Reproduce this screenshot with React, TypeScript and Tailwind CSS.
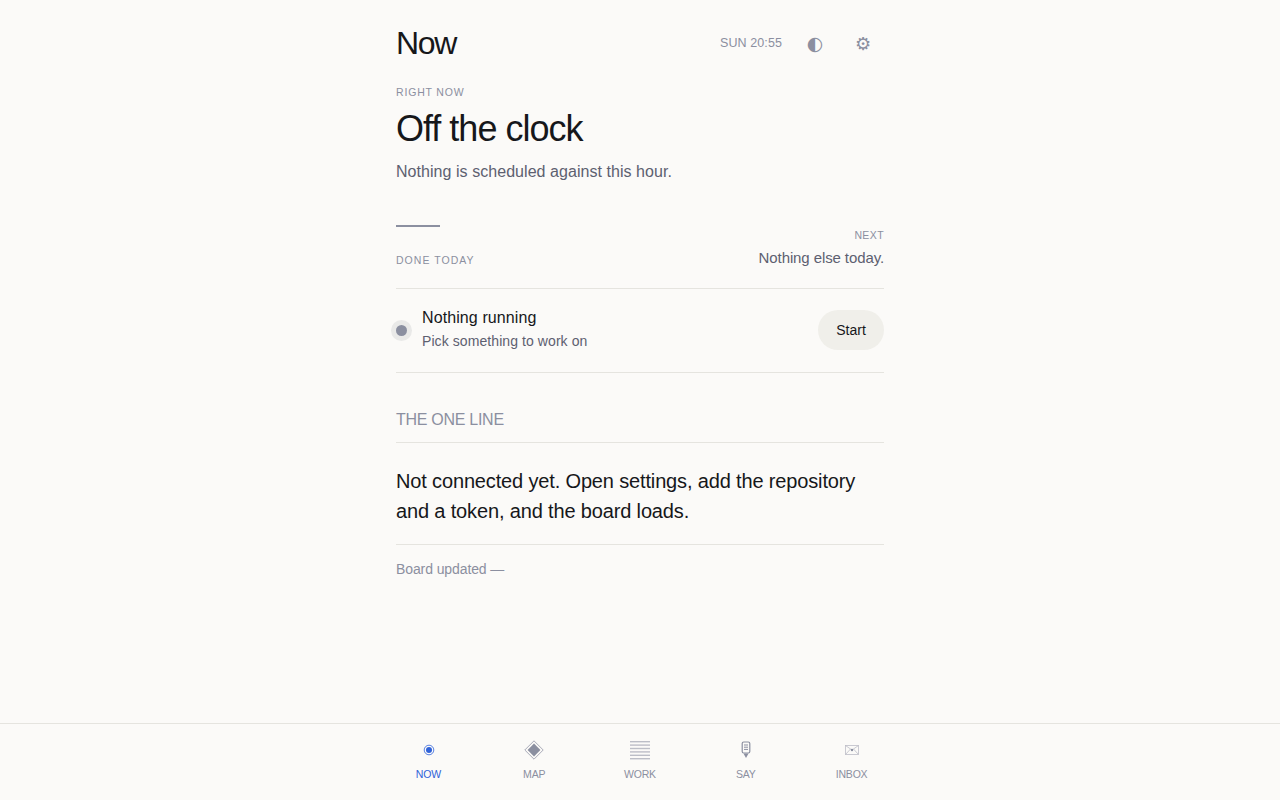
const caps = "text-[#8b8fa0]";

const tabs = [
    { label: 'NOW', active: true },
    { label: 'MAP', active: false },
    { label: 'WORK', active: false },
    { label: 'SAY', active: false },
    { label: 'INBOX', active: false },
];

function TabIcon({ label }: { label: string }) {
    if (label === 'NOW') {
        return (
            <svg className="ml-[1px]" width="12" height="12" viewBox="0 0 12 12">
                <circle cx="6" cy="6" r="4.8" fill="none" stroke="#2f62d9" strokeWidth="1" opacity="0.8" />
                <circle cx="6" cy="6" r="3" fill="#2f62d9" />
            </svg>
        );
    }
    if (label === 'MAP') {
        return (
            <svg width="20" height="20" viewBox="0 0 20 20">
                <path d="M10 .8 19.2 10 10 19.2 .8 10Z" fill="none" stroke="#a9abb8" strokeWidth="1" />
                <path d="M10 3.6 16.4 10 10 16.4 3.6 10Z" fill="#8b8fa0" />
            </svg>
        );
    }
    if (label === 'WORK') {
        return (
            <svg width="20" height="20" viewBox="0 0 20 20" fill="#bcbec7">
                <rect x="0" y="1" width="20" height="1.4" />
                <rect x="0" y="4.4" width="20" height="1.4" />
                <rect x="0" y="7.8" width="20" height="1.4" />
                <rect x="0" y="11.2" width="20" height="1.4" />
                <rect x="0" y="14.6" width="20" height="1.4" />
                <rect x="0" y="18" width="20" height="1.4" />
            </svg>
        );
    }
    if (label === 'SAY') {
        return (
            <svg width="12" height="18" viewBox="0 0 12 18">
                <rect x="2.2" y="1" width="7.6" height="11" rx="1.5" fill="none" stroke="#8b8fa0" strokeWidth="1.2" />
                <path d="M4 4h4M4 6.2h4M4 8.4h4" stroke="#8b8fa0" strokeWidth="1" />
                <path d="M3.5 12.5h5L6 17Z" fill="#8b8fa0" />
            </svg>
        );
    }
    return (
        <svg width="14" height="12" viewBox="0 0 14 12" fill="none" stroke="#bcbec7" strokeWidth="0.8">
            <rect x="0.5" y="1.5" width="13" height="9" />
            <path d="M.5 1.500 7 6l6.500-4.500M.5 10.500 5.500 5M13.500 10.500 8.500 5" />
            <circle cx="7" cy="6" r="1.200" fill="#8b8fa0" stroke="none" />
        </svg>
    );
}

export default function App() {
    return (
        <div className="font-['Liberation_Sans',sans-serif] h-[800px] flex flex-col bg-[#fbfaf8] text-[#16171a] overflow-hidden">
            <main className="flex-1 w-[488px] mx-auto">
                <header className="h-[86px] flex items-center justify-between">
                    <h1 className="text-[32px] leading-none tracking-[-1.3px]">Now</h1>
                    <div className={`flex items-center -mr-[3px] ${caps}`}>
                        <span className="text-[12.5px] tracking-[0.1px]">SUN 20:55</span>
                        <button className="w-[48px] ml-[9px] text-center text-[19px] leading-none font-['DejaVu_Sans',sans-serif]">◐</button>
                        <button className="w-[48px] pt-[1px] text-center text-[18px] leading-none">⚙</button>
                    </div>
                </header>

                <section>
                    <div className={`text-[10.5px] leading-[12px] tracking-[0.82px] ${caps}`}>RIGHT NOW</div>
                    <h2 className="mt-[11px] text-[36px] leading-[40px] tracking-[-1px]">Off the clock</h2>
                    <p className="mt-[11px] text-[16px] leading-[24px] tracking-[0.05px] text-[#5d6070]">Nothing is scheduled against this hour.</p>
                </section>

                <section className="mt-[41px] h-[64px] border-b border-[#e5e4df] flex justify-between">
                    <div>
                        <div className="w-[44px] h-[1.5px] bg-[#8b8fa0]" />
                        <div className={`mt-[26.5px] text-[10.5px] leading-[14px] tracking-[1.04px] ${caps}`}>DONE TODAY</div>
                    </div>
                    <div className="text-right pt-[3px]">
                        <div className={`text-[10.5px] leading-[14px] tracking-[0.4px] ${caps}`}>NEXT</div>
                        <div className="mt-[6px] text-[15px] leading-[20px] tracking-[-0.1px] text-[#5d6070]">Nothing else today.</div>
                    </div>
                </section>

                <section className="h-[84px] border-b border-[#e5e4df] flex items-center">
                    <span className="w-[11px] h-[11px] rounded-full bg-[#8b8fa0] ring-[5px] ring-[#e9e9e8] shrink-0" />
                    <div className="ml-[15px] flex-1 pb-[5px]">
                        <div className="text-[16px] leading-[24px] tracking-[0.1px]">Nothing running</div>
                        <div className="text-[14px] leading-[20px] tracking-[0.08px] text-[#5d6070] mt-[1px]">Pick something to work on</div>
                    </div>
                    <button className="h-[40px] w-[66px] mb-[1px] rounded-full bg-[#f0efea] text-[14px]">Start</button>
                </section>

                <section className="mt-[35px]">
                    <div className={`h-[35px] border-b border-[#e5e4df] text-[16px] leading-[24px] tracking-[-0.28px] ${caps}`}>THE ONE LINE</div>
                    <p className="pt-[23px] pb-[18px] border-b border-[#e5e4df] text-[20px] leading-[30px] tracking-[-0.15px]">
                        Not connected yet. Open settings, add the repository and a token, and the board loads.
                    </p>
                    <div className={`mt-[14px] text-[14px] leading-[20px] tracking-[-0.1px] ${caps}`}>Board updated —</div>
                </section>
            </main>

            <nav className="h-[77px] border-t border-[#e5e4df] flex justify-center">
                <div className="w-[529px] grid grid-cols-5">
                    {tabs.map(tab => (
                        <div key={tab.label} className={`flex flex-col items-center pt-[13px] ${tab.active ? 'text-[#2f62d9]' : caps}`}>
                            <span className="h-[26px] flex items-center justify-center">
                                <TabIcon label={tab.label} />
                            </span>
                            <span className="mt-[4px] text-[10.5px] leading-[14px] tracking-[-0.2px]">{tab.label}</span>
                        </div>
                    ))}
                </div>
            </nav>
        </div>
    );
}
